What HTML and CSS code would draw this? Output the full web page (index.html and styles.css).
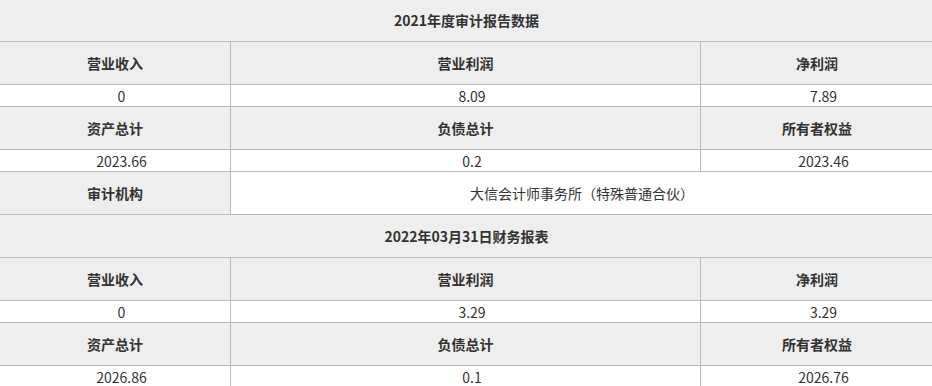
FILE: index.html
```html
<!DOCTYPE html>
<html lang="zh-CN">
<head>
<meta charset="utf-8">
<link rel="stylesheet" href="styles.css">
</head>
<body>
<table class="report">
  <colgroup>
    <col class="c0"><col class="c1"><col class="c2">
  </colgroup>
  <tr class="title"><td colspan="3">2021年度审计报告数据</td></tr>
  <tr class="head"><td>营业收入</td><td>营业利润</td><td>净利润</td></tr>
  <tr class="val"><td>0</td><td>8.09</td><td>7.89</td></tr>
  <tr class="head"><td>资产总计</td><td>负债总计</td><td>所有者权益</td></tr>
  <tr class="val"><td>2023.66</td><td>0.2</td><td>2023.46</td></tr>
  <tr class="audit"><td class="lbl">审计机构</td><td colspan="2" class="org">大信会计师事务所（特殊普通合伙）</td></tr>
  <tr class="title"><td colspan="3">2022年03月31日财务报表</td></tr>
  <tr class="head"><td>营业收入</td><td>营业利润</td><td>净利润</td></tr>
  <tr class="val"><td>0</td><td>3.29</td><td>3.29</td></tr>
  <tr class="head"><td>资产总计</td><td>负债总计</td><td>所有者权益</td></tr>
  <tr class="val"><td>2026.86</td><td>0.1</td><td>2026.76</td></tr>
</table>
</body>
</html>
```
FILE: styles.css
```css
html, body {
  margin: 0;
  padding: 0;
  background: #fff;
  overflow: hidden;
}
.report {
  border-collapse: collapse;
  margin: -2px 0 0 -1px;
  width: 934px;
  table-layout: fixed;
  font-family: "Noto Sans CJK SC", "Noto Sans", sans-serif;
  font-size: 14px;
  color: #333;
}
.c0 { width: 231px; }
.c1 { width: 470px; }
.c2 { width: 233px; }
.report td {
  border: 1px solid #bbb;
  padding: 0;
  text-align: center;
  line-height: 20px;
}
.title td {
  background: #eee;
  font-weight: bold;
  height: 42px;
}
.head td {
  background: #eee;
  font-weight: bold;
  height: 42px;
}
.val td {
  background: #fff;
  height: 21px;
  padding-left: 13px;
}
.audit td { height: 42px; }
.audit .lbl {
  background: #eee;
  font-weight: bold;
}
.audit .org {
  background: #fff;
}
```
